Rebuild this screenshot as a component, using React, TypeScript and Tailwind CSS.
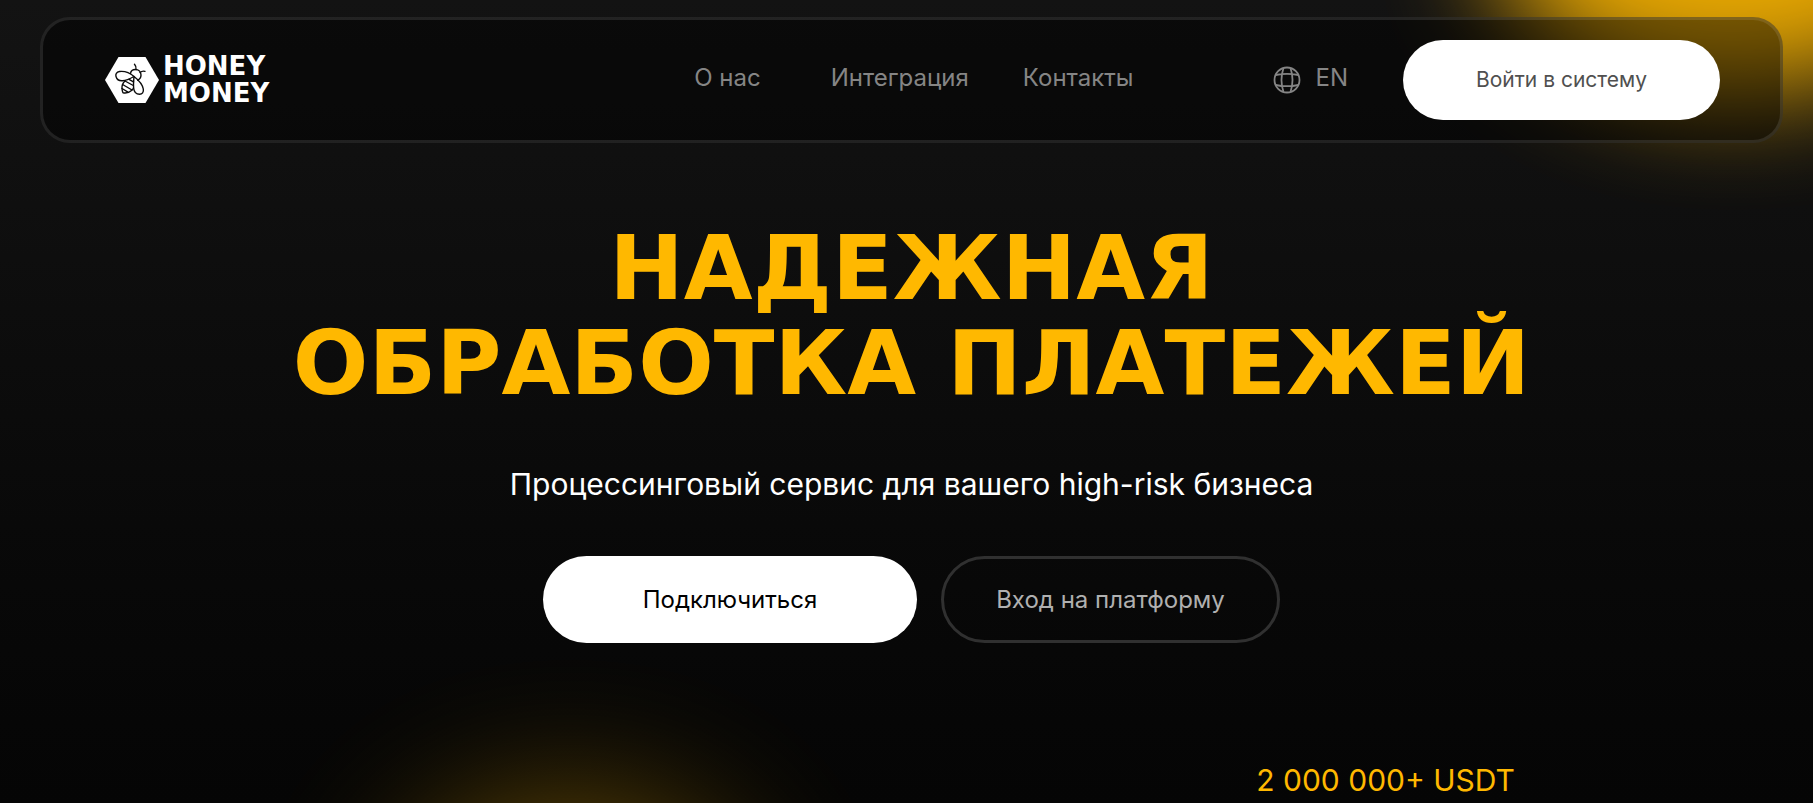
function HexBee() {
  return (
    <svg viewBox="0 0 54 46" className="h-[46px] w-[54px] shrink-0" fill="none" aria-hidden="true">
      <path d="M13.5 0h27L54 23 40.5 46h-27L0 23z" fill="#fff" />
      <g stroke="#0c0c0c" strokeWidth="1.4" strokeLinecap="round" strokeLinejoin="round">
        <path d="M25.500 16.500c.3-2.400 2.400-4 4.900-4 3.200 0 5.600 2.400 5.600 5.500 0 2.300-1.300 4.300-3.300 5.200" />
        <path d="M31 12.500c.3-2-.2-3.800-1.500-5.200M35 15.500c1.500-1.300 3.200-1.700 5-1.100" />
        <path d="M29 19.500c-4.500-4-10-5.500-14.500-5-3 .4-4.200 2.700-3.500 5 .8 2.900 3.500 4.500 6.500 4.300 4.200-.3 8-2.300 11.500-4.300z" />
        <path d="M29 19.500c4.500 3.500 8.500 8 9.300 12.500.6 3.300-1.200 5.300-3.700 5.300-3.300 0-5.600-2.700-6-6.300-.4-4 .1-7.500.4-11.500z" />
        <path d="M20 24c-2 1.800-3.300 4.500-3 7.500.1 1.700.6 3.400 1 4.300 2.800.5 6.500-.4 8.500-2.300.9-.8 1.600-1.700 2-2.500" />
        <path d="M20 24l8.300 4.500M17.600 27.500l9.400 5.500M17 31.500l6 3.700M24 22.300l4.500 2.500" />
      </g>
    </svg>
  );
}

function Globe() {
  return (
    <svg viewBox="0 0 28 28" className="h-7 w-7" fill="none" stroke="currentColor" strokeWidth="1.8" aria-hidden="true">
      <circle cx="14" cy="14" r="12.500" />
      <path d="M10.500 2c-2.700 8-2.700 16 0 24M17.500 2c2.700 8 2.700 16 0 24M2.700 9c7.500-1.600 15.100-1.600 22.600 0M2.700 19c7.500 1.600 15.100 1.600 22.600 0" />
    </svg>
  );
}

export default function App() {
  return (
    <div className="relative isolate min-h-screen overflow-hidden bg-linear-to-b from-[#131313] to-[#050505] pt-[17px] pr-[30px] pl-10 font-['Inter','Noto_Sans',sans-serif] text-white">
      <div className="absolute -top-[220px] -right-[160px] -z-10 h-[310px] w-[480px] rounded-[50%] bg-[#ffb800] opacity-90 blur-[56px]" />
      <div className="absolute top-[810px] left-[400px] -z-10 h-[260px] w-[340px] rounded-[50%] bg-[#ffb800] opacity-45 blur-[76px]" />

      <header className="flex items-center rounded-[30px] border-3 border-white/10 bg-black/45 py-5 pr-[60px] pl-[62px]">
        <a href="#" className="flex items-center gap-1 font-['DejaVu_Sans',sans-serif] text-[26px] leading-[27px] font-bold">
          <HexBee />
          <span>
            HONEY
            <br />
            MONEY
          </span>
        </a>
        <nav className="mr-[140px] mb-1 ml-auto flex text-2xl text-[#858585]">
          <a href="#about" className="mr-[70px]">О нас</a>
          <a href="#integration" className="mr-[54px]">Интеграция</a>
          <a href="#contacts">Контакты</a>
        </nav>
        <button type="button" className="mr-[55px] flex items-center gap-[14px] text-2xl text-[#858585]">
          <Globe />
          <span className="mb-1">EN</span>
        </button>
        <button type="button" className="h-20 w-[317px] rounded-full bg-white text-[21px] text-[#505050]">
          Войти в систему
        </button>
      </header>

      <main className="flex flex-col items-center pt-[78px]">
        <h1 className="text-center font-['DejaVu_Sans',sans-serif] text-[89px] leading-[95px] font-bold whitespace-nowrap text-[#ffb800]">
          НАДЕЖНАЯ
          <br />
          ОБРАБОТКА ПЛАТЕЖЕЙ
        </h1>
        <p className="mt-[53px] text-[30px] leading-10">Процессинговый сервис для вашего high-risk бизнеса</p>
        <div className="mt-[52px] flex gap-6 text-2xl">
          <button type="button" className="h-[87px] w-[374px] rounded-full bg-white text-black">
            Подключиться
          </button>
          <button type="button" className="h-[87px] w-[339px] rounded-full border-3 border-[#303030] text-[#b0b0b0]">
            Вход на платформу
          </button>
        </div>
        <p className="mt-[117px] mr-[268px] self-end text-[30px] leading-10 text-[#ffb800]">2 000 000+ USDT</p>
      </main>
    </div>
  );
}
